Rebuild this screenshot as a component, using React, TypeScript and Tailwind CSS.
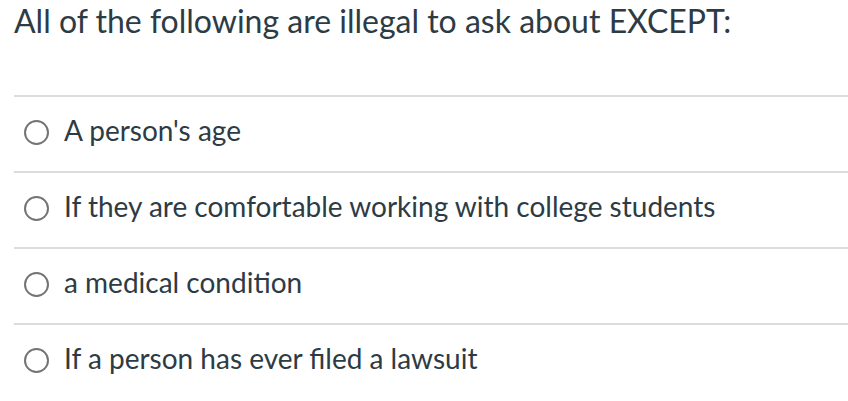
const answers = [
  "A person's age",
  "If they are comfortable working with college students",
  "a medical condition",
  "If a person has ever filed a lawsuit",
];

export default function App() {
  return (
    <main className="min-h-screen bg-white text-[#2d3b45]" style={{ fontFamily: "Lato, 'Noto Sans', sans-serif" }}>
      <h1 className="pl-[14px] pt-[1px] text-[32px] leading-[40px] font-normal">
        All of the following are illegal to ask about EXCEPT:
      </h1>
      <div className="ml-[14px] mt-[54px]">
        {answers.map((a) => (
          <div key={a} className="border-t-2 border-[#dcdcdc] h-[76px] pb-[3px] flex items-center">
            <span className="ml-[10px] w-[25px] h-[25px] rounded-full border-2 border-[#747474] shrink-0" />
            <span className="ml-[15px] mb-[6px] text-[28px] leading-[30px]">{a}</span>
          </div>
        ))}
      </div>
    </main>
  );
}
